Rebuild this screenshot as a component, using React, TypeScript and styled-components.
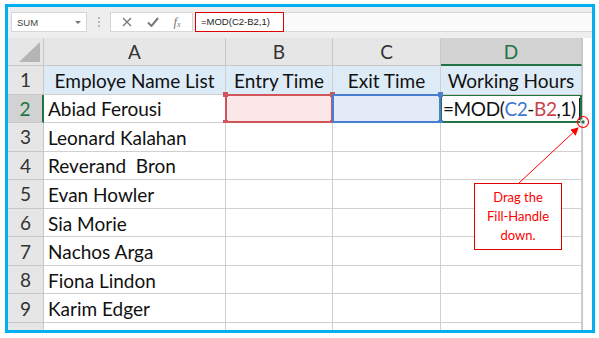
import React from 'react';
import styled, { createGlobalStyle } from 'styled-components';

const Global = createGlobalStyle`
  html, body { margin: 0; padding: 0; background: #fff; }
  body { font-family: Lato, "Liberation Sans", sans-serif; }
`;

const Frame = styled.div`
  position: relative;
  box-sizing: border-box;
  width: 590px;
  height: 329px;
  margin: 4px 0 0 5px;
  border: 3px solid #00b0f0;
  background: #fff;
  overflow: hidden;
  display: flex;
  flex-direction: column;
`;

const Toolbar = styled.div`
  height: 31px;
  box-sizing: border-box;
  padding: 5px 0 0 3px;
  background: #eeeeee;
  display: flex;
  align-items: flex-start;
`;

const NameBox = styled.div`
  box-sizing: border-box;
  width: 76px;
  height: 20px;
  background: #fff;
  border: 1px solid #d6d6d6;
  display: flex;
  align-items: center;
  justify-content: space-between;
  padding: 0 5px 0 5px;
  font-family: "Liberation Sans", Arial, sans-serif;
  font-size: 9.5px;
  color: #444;
`;

const Caret = styled.span`
  width: 0;
  height: 0;
  border-left: 3px solid transparent;
  border-right: 3px solid transparent;
  border-top: 3px solid #777;
`;

const Grip = styled.div`
  width: 23px;
  height: 20px;
  display: flex;
  flex-direction: column;
  align-items: center;
  justify-content: center;
  gap: 2px;
  span {
    width: 2px;
    height: 2px;
    background: #b8b8b8;
  }
`;

const FxBox = styled.div`
  box-sizing: border-box;
  width: 83px;
  height: 20px;
  background: #fff;
  border: 1px solid #d6d6d6;
  display: flex;
  align-items: center;
  justify-content: space-around;
  padding: 0 4px;
  color: #8a8a8a;
`;

const FxGlyph = styled.span`
  font-family: "Liberation Serif", serif;
  font-style: italic;
  font-size: 13px;
  color: #7a7a7a;
  sub {
    font-size: 8px;
    vertical-align: -1px;
  }
`;

const FormulaInput = styled.div`
  flex: 1;
  margin-left: 2px;
  box-sizing: border-box;
  height: 20px;
  background: #fbfbfb;
  border-top: 1px solid #d6d6d6;
  border-bottom: 1px solid #d6d6d6;
  display: flex;
  align-items: center;
`;

const FormulaText = styled.div`
  box-sizing: border-box;
  width: 89px;
  height: 20px;
  margin-top: -1px;
  border: 1px solid #e00000;
  display: flex;
  align-items: center;
  padding-left: 5px;
  font-family: "Liberation Sans", Arial, sans-serif;
  font-size: 9.5px;
  color: #222;
  background: #fff;
`;

const Sheet = styled.div`
  flex: 1;
  display: grid;
  grid-template-columns: 36px 182px 107px 108px 141px 1fr;
  grid-template-rows: 28px repeat(9, 28.55px) 1fr;
  font-family: Lato, "Liberation Sans", sans-serif;
  color: #111;
`;

const ColHead = styled.div<{ $active?: boolean }>`
  box-sizing: border-box;
  display: flex;
  align-items: center;
  justify-content: center;
  font-size: 19px;
  background: ${p => (p.$active ? '#d2d2d2' : '#e6e6e6')};
  color: ${p => (p.$active ? '#217346' : '#333')};
  border-right: 1px solid #c8c8c8;
  border-bottom: ${p => (p.$active ? '2px solid #217346' : '1px solid #c8c8c8')};
`;

const Corner = styled.div`
  box-sizing: border-box;
  background: #e6e6e6;
  border-right: 1px solid #c8c8c8;
  border-bottom: 1px solid #c8c8c8;
  display: flex;
  align-items: flex-end;
  justify-content: flex-end;
  padding: 0 3px 3px 0;
`;

const Triangle = styled.div`
  width: 0;
  height: 0;
  border-left: 21px solid transparent;
  border-bottom: 20px solid #b5b5b5;
`;

const RowHead = styled.div<{ $active?: boolean }>`
  box-sizing: border-box;
  display: flex;
  align-items: center;
  justify-content: center;
  font-size: 19px;
  background: ${p => (p.$active ? '#d2d2d2' : '#e6e6e6')};
  color: ${p => (p.$active ? '#217346' : '#333')};
  border-bottom: 1px solid #c8c8c8;
  border-right: ${p => (p.$active ? '2px solid #217346' : '1px solid #c8c8c8')};
`;

const Cell = styled.div<{ $head?: boolean; $align?: 'left' | 'center' }>`
  position: relative;
  box-sizing: border-box;
  display: flex;
  align-items: center;
  justify-content: ${p => (p.$align === 'center' ? 'center' : 'flex-start')};
  padding-left: ${p => (p.$align === 'center' ? '0' : '4px')};
  padding-top: 1px;
  font-size: 19px;
  white-space: pre;
  background: ${p => (p.$head ? '#ddebf7' : '#fff')};
  border-right: 1px solid #d0d0d0;
  border-bottom: 1px solid #d0d0d0;
`;

const RefCell = styled.div<{ $color: string; $fill: string }>`
  position: relative;
  box-sizing: border-box;
  background: ${p => p.$fill};
  border: 2px solid ${p => p.$color};
  margin: -1px 0 0 -1px;
`;

const Handle = styled.span<{ $color: string; $x: 'l' | 'r'; $y: 't' | 'b' }>`
  position: absolute;
  width: 5px;
  height: 5px;
  background: ${p => p.$color};
  ${p => (p.$x === 'l' ? 'left: -4px;' : 'right: -4px;')}
  ${p => (p.$y === 't' ? 'top: -4px;' : 'bottom: -4px;')}
`;

const ActiveCell = styled.div`
  box-sizing: border-box;
  border: 2px solid #217346;
  margin: -1px 0 0 -1px;
  display: flex;
  align-items: center;
  padding-left: 1px;
  padding-top: 1px;
  font-size: 19px;
  letter-spacing: -0.4px;
  white-space: pre;
  background: #fff;
`;

const Ref = styled.span<{ $color: string }>`
  color: ${p => p.$color};
`;

const TextCaret = styled.span`
  display: inline-block;
  width: 1px;
  height: 22px;
  margin-left: 3px;
  background: #222;
`;

const Gutter = styled.div`
  box-sizing: border-box;
  background: #fff;
  border-left: 1px solid #c8c8c8;
`;

const BottomStrip = styled.div<{ $head?: boolean }>`
  box-sizing: border-box;
  background: ${p => (p.$head ? '#e6e6e6' : '#fff')};
  border-right: 1px solid ${p => (p.$head ? '#c8c8c8' : '#d0d0d0')};
`;

const Callout = styled.div`
  position: absolute;
  left: 466px;
  top: 176px;
  width: 88px;
  height: 67px;
  box-sizing: border-box;
  border: 1px solid #e00000;
  background: #fff;
  color: #ff0000;
  font-family: Lato, "Liberation Sans", sans-serif;
  font-size: 13px;
  line-height: 19px;
  text-align: center;
  display: flex;
  align-items: center;
  justify-content: center;
`;

const Overlay = styled.svg`
  position: absolute;
  left: 0;
  top: 0;
  pointer-events: none;
`;

const names = [
  'Abiad Ferousi',
  'Leonard Kalahan',
  'Reverand  Bron',
  'Evan Howler',
  'Sia Morie',
  'Nachos Arga',
  'Fiona Lindon',
  'Karim Edger',
];

export default function App() {
  return (
    <>
      <Global />
      <Frame>
        <Toolbar>
          <NameBox>
            <span>SUM</span>
            <Caret />
          </NameBox>
          <Grip>
            <span />
            <span />
            <span />
          </Grip>
          <FxBox>
            <svg width="10" height="10" viewBox="0 0 10 10">
              <path d="M1 1L9 9M9 1L1 9" stroke="#7a7a7a" strokeWidth="1.4" />
            </svg>
            <svg width="12" height="10" viewBox="0 0 12 10">
              <path d="M1 5.5L4.5 9L11 1" stroke="#7a7a7a" strokeWidth="2" fill="none" />
            </svg>
            <FxGlyph>
              f<sub>x</sub>
            </FxGlyph>
          </FxBox>
          <FormulaInput>
            <FormulaText>=MOD(C2-B2,1)</FormulaText>
          </FormulaInput>
        </Toolbar>
        <Sheet>
          <Corner>
            <Triangle />
          </Corner>
          <ColHead>A</ColHead>
          <ColHead>B</ColHead>
          <ColHead>C</ColHead>
          <ColHead $active>D</ColHead>
          <Gutter />

          <RowHead>1</RowHead>
          <Cell $head $align="center">Employe Name List</Cell>
          <Cell $head $align="center">Entry Time</Cell>
          <Cell $head $align="center">Exit Time</Cell>
          <Cell $head $align="center">Working Hours</Cell>
          <Gutter />

          <RowHead $active>2</RowHead>
          <Cell>{names[0]}</Cell>
          <RefCell $color="#d0555a" $fill="#fbe7e7">
            <Handle $color="#d0555a" $x="l" $y="t" />
            <Handle $color="#d0555a" $x="l" $y="b" />
            <Handle $color="#d0555a" $x="r" $y="t" />
            <Handle $color="#d0555a" $x="r" $y="b" />
          </RefCell>
          <RefCell $color="#4a7fd0" $fill="#e3ebf7">
            <Handle $color="#4a7fd0" $x="r" $y="t" />
            <Handle $color="#4a7fd0" $x="r" $y="b" />
          </RefCell>
          <ActiveCell>
            =MOD(<Ref $color="#3e78d0">C2</Ref>-<Ref $color="#c8434a">B2</Ref>,1)
            <TextCaret />
          </ActiveCell>
          <Gutter />

          {names.slice(1).map((n, i) => (
            <React.Fragment key={n}>
              <RowHead>{i + 3}</RowHead>
              <Cell>{n}</Cell>
              <Cell />
              <Cell />
              <Cell />
              <Gutter />
            </React.Fragment>
          ))}

          <BottomStrip $head />
          <BottomStrip />
          <BottomStrip />
          <BottomStrip />
          <BottomStrip />
          <Gutter />
        </Sheet>

        <Overlay width="584" height="323" viewBox="0 0 584 323">
          <defs>
            <marker id="ah" markerWidth="8" markerHeight="8" refX="7" refY="4" orient="auto" markerUnits="userSpaceOnUse">
              <path d="M0 0L8 4L0 8Z" fill="#ff0000" />
            </marker>
          </defs>
          <line x1="511" y1="176" x2="570" y2="121" stroke="#ff0000" strokeWidth="1" markerEnd="url(#ah)" />
          <rect x="573" y="113" width="4" height="4" fill="#217346" stroke="#fff" strokeWidth="1" />
          <circle cx="575" cy="115" r="5.5" fill="none" stroke="#ff0000" strokeWidth="1.2" />
        </Overlay>

        <Callout>
          Drag the
          <br />
          Fill-Handle
          <br />
          down.
        </Callout>
      </Frame>
    </>
  );
}
